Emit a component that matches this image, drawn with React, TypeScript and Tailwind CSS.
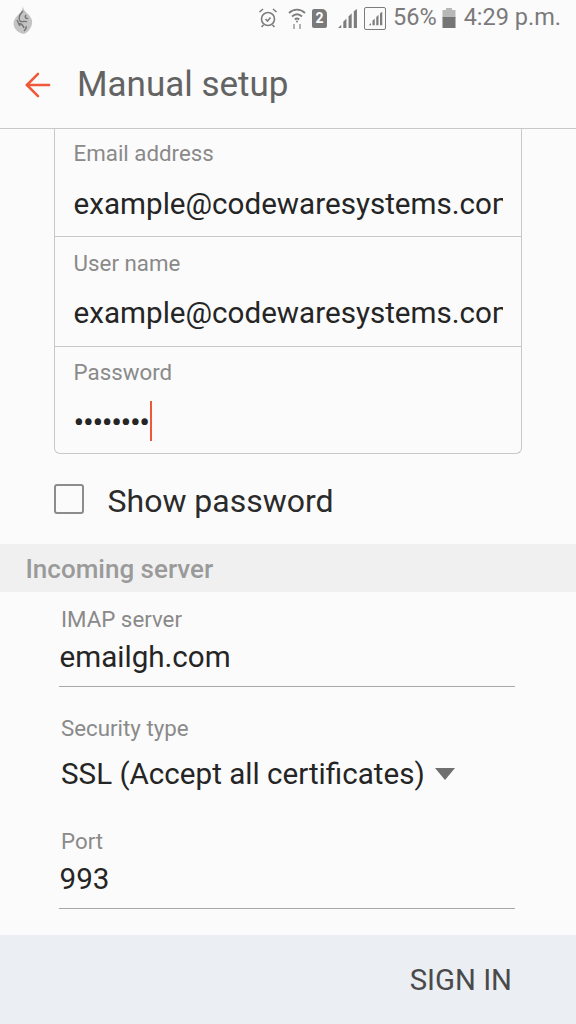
import { ArrowLeft } from 'lucide-react';

interface BoxFieldProps {
  label: string;
  value: string;
  rowClass: string;
  valueClass: string;
}

const BoxField = ({ label, value, rowClass, valueClass }: BoxFieldProps) => (
  <div className={`border-b border-[#c8c8c8] pl-[18.6px] pr-[18px] ${rowClass}`}>
    <div className="h-[32px] text-[22.3px] leading-[32px] text-[#8a8a8a]">{label}</div>
    <div className={`overflow-hidden whitespace-nowrap text-[29.6px] leading-[40px] text-[#252525] ${valueClass}`}>{value}</div>
  </div>
);

const ServerField = ({ label, value }: { label: string; value: string }) => (
  <div className="ml-[59px] mr-[61px] h-[84px] border-b border-[#a8a8a8]">
    <div className="pl-[2px] text-[22.3px] leading-[32px] text-[#8a8a8a]">{label}</div>
    <div className="mt-[2px] pl-[0.5px] text-[29.6px] leading-[40px] text-[#252525]">{value}</div>
  </div>
);

const SignalBars = ({ size }: { size: number }) => (
  <svg width={size} height={size} viewBox="0 0 20 20" fill="#7d7d7d">
    <path d="M1 19 L4 16 V19Z" />
    <path d="M6 19 V13 L9 10 V19Z" />
    <path d="M11 19 V8 L14 5 V19Z" />
    <path d="M16 19 V3 L19 1 V19Z" />
  </svg>
);

const StatusBar = () => (
  <div className="flex h-[36px] items-center justify-between pl-[12px] pr-[15px] text-[#7a7a7a]">
    <svg width="22" height="30" viewBox="0 0 22 30" className="mt-[1px]">
      <path d="M11 0.5 C11 3 11 5 14 8 C18 12 21 15 20 20 C19 25 15 29 12 30 C6 29 2 25 1.5 20 C1.5 15 5 12 8 9 C10 7 11 4 11 0.5Z" fill="#c4c4c4" />
      <path d="M11 7 C8 10 6 14 8 17 C10 19 13 16 15 18 M6 20 C9 19 11 21 12 24 M14 11 C12 14 15 15 16 14 M5 16 L8 22 M14 22 C15 24 13 26 12 27" stroke="#757575" strokeWidth="1.4" fill="none" />
    </svg>
    <div className="flex items-center">
      <svg width="20" height="22" viewBox="0 0 20 22" fill="none" stroke="#7d7d7d" strokeWidth="1.6">
        <circle cx="10" cy="12" r="6.5" />
        <path d="M7.5 12 L9.5 14 L12.5 10.5" />
        <path d="M1.5 5 L5 2 M18.5 5 L15 2 M5.5 18 L3.5 20 M14.5 18 L16.5 20" />
      </svg>
      <svg width="18" height="24" viewBox="0 0 18 24" fill="none" stroke="#7d7d7d" strokeWidth="1.8" className="ml-[10px]">
        <path d="M1 7 C5.5 2.5 12.5 2.5 17 7" />
        <path d="M4 10.5 C7 7.5 11 7.5 14 10.5" />
        <path d="M6.8 13.5 C8 12.4 10 12.4 11.2 13.5" />
        <circle cx="9" cy="15.5" r="1" fill="#7d7d7d" stroke="none" />
        <path d="M6 23 V18 M12 18 V23" stroke="#aaa" />
      </svg>
      <div className="ml-[6px] flex h-[19px] w-[15px] items-center justify-center rounded-[2px] rounded-tr-[5px] bg-[#7a7a7a] text-[14px] font-bold leading-none text-white">
        2
      </div>
      <div className="ml-[10px]">
        <SignalBars size={21} />
      </div>
      <div className="ml-[6px] flex h-[23px] w-[22px] items-center justify-center rounded-[2px] border border-[#7d7d7d]">
        <SignalBars size={15} />
      </div>
      <span className="ml-[7px] text-[23.5px] leading-none">56%</span>
      <svg width="14" height="20" viewBox="0 0 14 20" className="ml-[5px]">
        <rect x="4" y="0" width="6" height="2" fill="#b8b8b8" />
        <rect x="0.5" y="2" width="13" height="8" fill="#b8b8b8" />
        <rect x="0.5" y="9" width="13" height="11" fill="#757575" />
      </svg>
      <span className="ml-[8px] text-[23.5px] leading-none">4:29 p.m.</span>
    </div>
  </div>
);

export default function App() {
  return (
    <div className="flex h-[1024px] w-[576px] flex-col overflow-hidden bg-[#fbfbfb] font-['Roboto',sans-serif]">
      <StatusBar />
      <div className="flex h-[93px] items-center border-b border-[#c8c8c8] pl-[19px] pt-[6px]">
        <ArrowLeft size={38} strokeWidth={1.6} className="text-[#f0583a]" />
        <div className="ml-[20px] text-[35px] leading-[40px] text-[#636363]">Manual setup</div>
      </div>
      <div className="mx-[54px] h-[325px] rounded-b-[6px] border-x border-b border-[#c8c8c8]">
        <BoxField label="Email address" value="example@codewaresystems.com" rowClass="h-[108px] pt-[8px]" valueClass="mt-[15px]" />
        <BoxField label="User name" value="example@codewaresystems.com" rowClass="h-[110px] pt-[10px]" valueClass="mt-[14px]" />
        <div className="pl-[18.6px] pt-[9px]">
          <div className="text-[22.3px] leading-[32px] text-[#8a8a8a]">Password</div>
          <div className="mt-[13px] flex h-[40px] items-center">
            <span className="mt-[2px] text-[32px] leading-none tracking-[-1.4px] text-[#252525]">••••••••</span>
            <div className="ml-[1px] h-[40px] w-[2px] bg-[#f0583a]" />
          </div>
        </div>
      </div>
      <div className="flex h-[90px] items-center pl-[54px]">
        <div className="h-[30px] w-[30px] rounded-[3px] border-2 border-[#8c8c8c]" />
        <div className="ml-[23.5px] mt-[4px] text-[32px] leading-[40px] text-[#2b2b2b]">Show password</div>
      </div>
      <div className="flex h-[48px] items-center bg-[#f0f0f0] pl-[25.5px] pt-[2px] text-[26px] font-medium leading-none text-[#9a9a9a]">
        Incoming server
      </div>
      <div className="flex-1 pt-[11px]">
        <ServerField label="IMAP server" value="emailgh.com" />
        <div className="ml-[59px] mr-[61px] mt-[25px] h-[113px]">
          <div className="pl-[2px] text-[22.3px] leading-[32px] text-[#8a8a8a]">Security type</div>
          <div className="mt-[10px] flex items-center pl-[2px]">
            <span className="text-[29.6px] leading-[40px] text-[#252525]">SSL (Accept all certificates)</span>
            <div className="ml-[10px] h-0 w-0 border-x-[10px] border-t-[12px] border-x-transparent border-t-[#6f6f6f]" />
          </div>
        </div>
        <ServerField label="Port" value="993" />
      </div>
      <div className="flex h-[89px] items-center justify-end bg-[#ebeef2] pr-[64px] pt-[2px] text-[29.3px] leading-none text-[#4a4a4a]">
        SIGN IN
      </div>
    </div>
  );
}
